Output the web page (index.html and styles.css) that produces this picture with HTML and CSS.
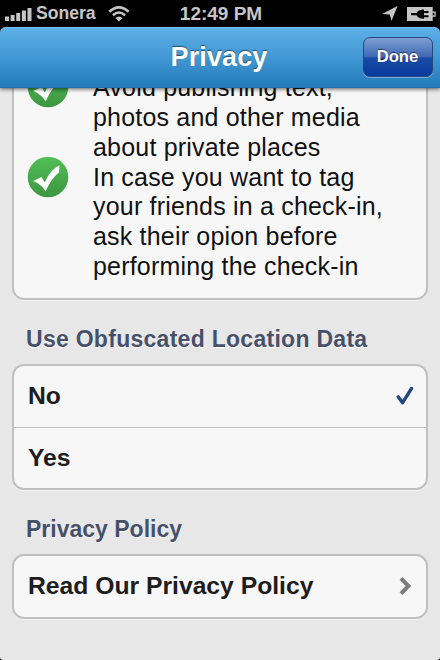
FILE: index.html
```html
<!DOCTYPE html>
<html lang="en">
<head>
<meta charset="utf-8">
<title>Privacy</title>
<link rel="stylesheet" href="styles.css">
</head>
<body>
<div class="phone">
  <div class="status">
    <div class="carrier">
      <svg width="27" height="15" viewBox="0 0 27 15" fill="#c6c6c6"><path d="M0 10.500h4V15H0zM5.600 9h4v6h-4zM11.200 7h4v8h-4zM16.900 4.500h4V15h-4zM22.500 2h4v13h-4z"/></svg>
      <span class="carrier-name">Sonera</span>
      <svg class="wifi" width="22" height="16" viewBox="0 0 22 16"><g fill="none" stroke="#c6c6c6" stroke-width="2.500"><path d="M1.300 5.800Q11 -3 20.700 5.800"/><path d="M5 9.200Q11 3.800 17 9.200"/></g><path fill="#c6c6c6" d="M7.500 12Q11 8.800 14.500 12L11 15.500z"/></svg>
    </div>
    <div class="clock">12:49 PM</div>
    <div class="indicators">
      <svg width="16" height="15" viewBox="0 0 16 15"><path fill="#c6c6c6" d="M15.500 0L9.500 15L7.800 8.500L0 8z"/></svg>
      <svg width="29" height="14" viewBox="0 0 29 14"><path fill="#c6c6c6" d="M0 0h25.700v4.500h3v5.200h-3V14H0z"/><path fill="#000" d="M4 6h5.500C11 3 13.500 2.500 17 2.500V4h4.500v2H17v2.200h4.500v2H17v1.500c-3.500 0-6-.6-7.500-3.500H4z"/><path fill="#000" d="M25.700 5.800h1.700v2.600h-1.700z"/></svg>
    </div>
  </div>
  <header class="navbar">
    <h1>Privacy</h1>
    <button class="done">Done</button>
  </header>
  <main class="content">
    <section class="card tips">
      <div class="tip">
        <svg class="tick" width="42" height="42" viewBox="0 0 42 42"><defs><linearGradient id="green" x2="0" y2="1"><stop stop-color="#52bf57"/><stop offset="1" stop-color="#3c9641"/></linearGradient></defs><circle cx="21" cy="21" r="20.300" fill="url(#green)"/><path fill="#fff" d="M6 25l8.600-4 3.200 5.600C22 17.500 25 13.500 32.500 9.300L32 16.500C26 21 22.500 27 18.800 35.300C15 30 11.500 27 6 25z"/></svg>
        <p>Avoid publishing text,<br>photos and other media<br>about private places</p>
      </div>
      <div class="tip">
        <svg class="tick" width="42" height="42" viewBox="0 0 42 42"><circle cx="21" cy="21" r="20.300" fill="url(#green)"/><path fill="#fff" d="M6 25l8.600-4 3.200 5.600C22 17.500 25 13.500 32.500 9.300L32 16.500C26 21 22.500 27 18.800 35.300C15 30 11.500 27 6 25z"/></svg>
        <p>In case you want to tag<br>your friends in a check-in,<br>ask their opion before<br>performing the check-in</p>
      </div>
    </section>
    <h2>Use Obfuscated Location Data</h2>
    <section class="card">
      <div class="row"><span>No</span><svg width="18" height="20" viewBox="0 0 18 20"><path d="M2.200 10.800L6.500 16.800L15.500 2.500" fill="none" stroke="#234683" stroke-width="3.300" stroke-linecap="round" stroke-linejoin="round"/></svg></div>
      <div class="row"><span>Yes</span></div>
    </section>
    <h2 class="policy-heading">Privacy Policy</h2>
    <section class="card">
      <div class="row"><span>Read Our Privacy Policy</span><svg width="18" height="20" viewBox="0 0 18 20"><path d="M5 2.300L12.500 10L5 17.700" fill="none" stroke="#7d7d7d" stroke-width="4"/></svg></div>
    </section>
  </main>
</div>
</body>
</html>
```
FILE: styles.css
```css
* { box-sizing: border-box; }
body {
  margin: 0;
  background: #000;
  font-family: "Liberation Sans", Arial, sans-serif;
}
.phone {
  width: 440px;
  height: 660px;
  display: flex;
  flex-direction: column;
  overflow: hidden;
}
.status {
  flex: none;
  height: 27px;
  padding: 0 4px 0 5px;
  display: grid;
  grid-template-columns: 1fr auto 1fr;
  align-items: center;
  color: #c6c6c6;
  font-size: 19px;
  font-weight: bold;
  line-height: 27px;
}
.carrier { display: flex; align-items: center; }
.carrier-name { margin-left: 4px; font-size: 17.6px; }
.wifi { margin-left: 12px; }
.clock { margin-left: 1px; }
.indicators { display: flex; align-items: center; justify-content: flex-end; gap: 9px; }
.navbar {
  flex: none;
  position: relative;
  z-index: 1;
  height: 61px;
  padding-right: 7px;
  display: grid;
  grid-template-columns: 1fr auto 1fr;
  align-items: center;
  border-radius: 6px 6px 0 0;
  background: linear-gradient(#5dafe7, #4298d4 50%, #2379b8);
  box-shadow: inset 0 1px #75bfeb, inset 0 -1px #1d6dab, 0 1px 4px rgba(0, 0, 0, .65);
}
h1 {
  grid-column: 2;
  margin: 0 0 0 5px;
  color: #fff;
  font-size: 27px;
  letter-spacing: .1px;
  text-shadow: 0 -1px 1px rgba(0, 0, 0, .5);
}
.done {
  justify-self: end;
  width: 70px;
  height: 40px;
  margin-top: -1px;
  padding: 0 1px 0 0;
  border: 1px solid #264780;
  border-radius: 7px;
  background: linear-gradient(#7e9fd2, #3e67b5 50%, #1a4ba6 52%, #083a9e);
  box-shadow: 0 1px rgba(255, 255, 255, .35);
  color: #fff;
  font: bold 16.6px "Liberation Sans", Arial, sans-serif;
  text-shadow: 0 -1px 1px rgba(0, 0, 0, .5);
}
.content {
  flex: 1;
  min-height: 0;
  padding: 0 12px;
  overflow: hidden;
  border-radius: 0 0 3px 3px;
  background: #e7e7e7;
}
.card {
  overflow: hidden;
  border: 2px solid #bfbfbf;
  border-radius: 12px;
  background: #f7f7f7;
  box-shadow: 0 1px #f5f5f5;
}
.tips {
  height: 240px;
  margin-top: -28px;
  padding: 11px 14px 0 13px;
}
.tip { display: flex; align-items: flex-start; }
.tick { flex: none; margin-top: -7px; }
.tip p {
  margin: 0 0 0 24px;
  color: #111;
  font-size: 25px;
  line-height: 29.85px;
  letter-spacing: .19px;
  white-space: nowrap;
}
h2 {
  margin: 0;
  height: 64px;
  padding: 24px 0 0 14px;
  color: #475069;
  font-size: 23px;
  line-height: 30px;
  letter-spacing: .28px;
  text-shadow: 0 1px #fff;
}
.policy-heading { letter-spacing: 0; }
.row {
  height: 61px;
  padding: 0 12px 1px 14px;
  display: flex;
  align-items: center;
  justify-content: space-between;
  color: #1d1d1d;
  font-size: 24.7px;
  font-weight: bold;
}
.row + .row { height: 61px; padding-bottom: 0; border-top: 1px solid #bdbdbd; box-shadow: inset 0 1px #fff; }
```
